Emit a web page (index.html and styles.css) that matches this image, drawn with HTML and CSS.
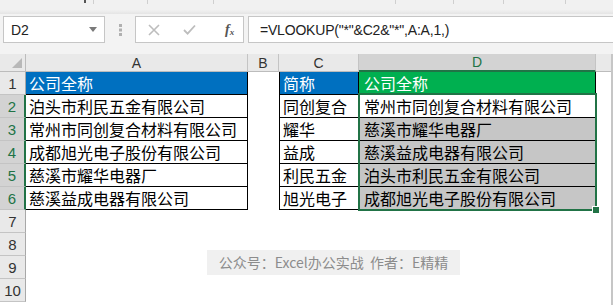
FILE: index.html
```html
<!DOCTYPE html>
<html lang="zh">
<head>
<meta charset="utf-8">
<title>VLOOKUP</title>
<link rel="stylesheet" href="styles.css">
</head>
<body>
<div class="ribbon">
  <span class="tick dark t1"></span>
  <span class="tick t2"></span>
  <span class="tick t3"></span>
  <span class="tick t4"></span>
  <span class="tick t5"></span>
  <span class="tick t6"></span>
  <span class="tick t7"></span>
  <span class="tick t8"></span>
</div>
<div class="fbar">
  <div class="namebox">
    <span class="ref">D2</span>
    <svg class="arrow" width="8" height="5" viewBox="0 0 8 5"><path d="M0 0H8L4 5Z" fill="#7a7a7a"/></svg>
  </div>
  <div class="grip">
    <svg width="3" height="12" viewBox="0 0 3 12"><rect x="0" y="0" width="3" height="3" fill="#b0b0b0"/><rect x="0" y="4.5" width="3" height="3" fill="#b0b0b0"/><rect x="0" y="9" width="3" height="3" fill="#b0b0b0"/></svg>
  </div>
  <div class="fnbox">
    <svg class="ico" width="12" height="12" viewBox="0 0 12 12"><path d="M1 1L11 11M11 1L1 11" stroke="#bdbdbd" stroke-width="1.6" fill="none"/></svg>
    <svg class="ico" width="13" height="11" viewBox="0 0 13 11"><path d="M1 6L4.6 9.6L12 1.5" stroke="#bdbdbd" stroke-width="1.8" fill="none"/></svg>
    <span class="fx">f<sub>x</sub></span>
  </div>
  <div class="formula">=VLOOKUP("*"&amp;C2&amp;"*",A:A,1,)</div>
</div>
<div class="sheet">
  <div class="corner"><svg width="10" height="10" viewBox="0 0 10 10"><path d="M10 0V10H0Z" fill="#b8b8b8"/></svg></div>
  <div class="ch">A</div>
  <div class="ch">B</div>
  <div class="ch">C</div>
  <div class="ch sel">D</div>
  <div class="ch last"></div>

  <div class="rh">1</div>
  <div class="c t blue">公司全称</div>
  <div class="c"></div>
  <div class="c t lft blue">简称</div>
  <div class="c t colD green">公司全称</div>
  <div class="c"></div>

  <div class="rh sel">2</div>
  <div class="c t">泊头市利民五金有限公司</div>
  <div class="c"></div>
  <div class="c t lft">同创复合</div>
  <div class="c t colD">常州市同创复合材料有限公司</div>
  <div class="c"></div>

  <div class="rh sel">3</div>
  <div class="c t">常州市同创复合材料有限公司</div>
  <div class="c"></div>
  <div class="c t lft">耀华</div>
  <div class="c t colD shade">慈溪市耀华电器厂</div>
  <div class="c"></div>

  <div class="rh sel">4</div>
  <div class="c t">成都旭光电子股份有限公司</div>
  <div class="c"></div>
  <div class="c t lft">益成</div>
  <div class="c t colD shade">慈溪益成电器有限公司</div>
  <div class="c"></div>

  <div class="rh sel">5</div>
  <div class="c t">慈溪市耀华电器厂</div>
  <div class="c"></div>
  <div class="c t lft">利民五金</div>
  <div class="c t colD shade">泊头市利民五金有限公司</div>
  <div class="c"></div>

  <div class="rh sel">6</div>
  <div class="c t">慈溪益成电器有限公司</div>
  <div class="c"></div>
  <div class="c t lft">旭光电子</div>
  <div class="c t colD shade">成都旭光电子股份有限公司</div>
  <div class="c"></div>

  <div class="rh">7</div><div class="c span"></div>
  <div class="rh">8</div><div class="c span"></div>
  <div class="rh">9</div><div class="c span"></div>
  <div class="rh">10</div><div class="c span"></div>

  <div class="selection"><span class="handle"></span></div>

  <div class="watermark">公众号：Excel办公实战&nbsp;&nbsp;作者：E精精</div>
</div>
</body>
</html>
```
FILE: styles.css
```css
html, body {
  margin: 0;
  padding: 0;
  background: #ffffff;
  overflow: hidden;
}
body {
  width: 613px;
  height: 305px;
  font-family: "Liberation Sans", Arial, sans-serif;
}

.ribbon {
  height: 14px;
  background: linear-gradient(#f1f1f1, #f1f1f1 70%, #e4e4e4);
  display: flex;
  align-items: flex-start;
}
.tick {
  width: 1px;
  height: 4px;
  background: #cfcfcf;
}
.tick.dark { background: #555; width: 2px; height: 3px; }
.t1 { margin-left: 84px; }
.t2 { margin-left: 7px; }
.t3 { margin-left: 53px; }
.t4 { margin-left: 65px; }
.t5 { margin-left: 181px; }
.t6 { margin-left: 57px; }
.t7 { margin-left: 49px; }
.t8 { margin-left: 61px; }

.fbar {
  height: 40px;
  background: #f3f3f3;
  display: flex;
  align-items: flex-start;
  padding-top: 2px;
  box-sizing: border-box;
}
.namebox {
  margin-left: 3px;
  width: 102px;
  height: 27px;
  box-sizing: border-box;
  background: #fff;
  border: 1px solid #c6c6c6;
  display: flex;
  align-items: center;
  justify-content: space-between;
  padding: 0 7px 0 7px;
  font-size: 14px;
  color: #222;
}
.grip {
  width: 30px;
  height: 27px;
  display: flex;
  align-items: center;
  justify-content: center;
}
.fnbox {
  width: 109px;
  height: 27px;
  box-sizing: border-box;
  background: #fff;
  border: 1px solid #c6c6c6;
  display: flex;
  align-items: center;
  padding-left: 12px;
  gap: 23px;
}
.fx {
  font-family: "Liberation Serif", serif;
  font-style: italic;
  font-weight: bold;
  font-size: 14px;
  color: #555;
  margin-left: 6px;
}
.fx sub { font-size: 9px; vertical-align: -1px; }
.formula {
  margin-left: 4px;
  flex: 1;
  height: 27px;
  box-sizing: border-box;
  background: #fff;
  border: 1px solid #c6c6c6;
  border-right: none;
  padding-left: 11px;
  display: flex;
  align-items: center;
  font-size: 14px;
  color: #222;
  letter-spacing: -0.2px;
}

.sheet {
  position: relative;
  width: 611px;
  height: 251px;
  border-right: 2px solid #c6c6c6;
  display: grid;
  grid-template-columns: 26px 222px 31px 80px 237px 15px;
  grid-template-rows: 18px repeat(10, 23px);
  background: #fff;
}
.corner {
  background: #e9e9e9;
  border-right: 1px solid #bcbcbc;
  border-bottom: 1px solid #bcbcbc;
  box-sizing: border-box;
  display: flex;
  align-items: flex-end;
  justify-content: flex-end;
  padding: 0 3px 3px 0;
}
.ch {
  background: #e9e9e9;
  border-right: 1px solid #c4c4c4;
  border-bottom: 1px solid #bcbcbc;
  box-sizing: border-box;
  font-size: 14px;
  color: #333;
  display: flex;
  align-items: center;
  justify-content: center;
}
.ch.sel {
  background: #d3d3d3;
  color: #217346;
  border-bottom: 2px solid #217346;
}
.ch.last { border-right: none; }
.rh {
  grid-column: 1;
  background: #e9e9e9;
  border-right: 1px solid #a8a8a8;
  border-bottom: 1px solid #c4c4c4;
  box-sizing: border-box;
  font-size: 15px;
  color: #333;
  display: flex;
  align-items: center;
  justify-content: center;
  padding-top: 1px;
}
.rh.sel {
  background: #d3d3d3;
  color: #217346;
  border-right: 2px solid #217346;
}
.c {
  box-sizing: border-box;
  font-family: "Noto Sans CJK SC", "Noto Sans", sans-serif;
  font-size: 16px;
  line-height: 22px;
  color: #000;
  padding-left: 3px;
  white-space: nowrap;
}
.c.span { grid-column: 2 / 7; }
.t {
  border-right: 1px solid #000;
  border-bottom: 1px solid #000;
}
.t.lft {
  border-left: 1px solid #000;
  padding-left: 3px;
}
.t.colD { padding-left: 5px; }
.blue { background: #0070c0; color: #fff; }
.green { background: #00b050; color: #fff; }
.shade { background: #c6c6c6; }

.selection {
  position: absolute;
  grid-column: 5 / 6;
  grid-row: 3 / 8;
  top: -2px;
  left: -1px;
  right: -1px;
  bottom: -1px;
  border: 2px solid #217346;
  pointer-events: none;
}
.handle {
  position: absolute;
  right: -5px;
  bottom: -5px;
  width: 6px;
  height: 6px;
  background: #217346;
  border: 1px solid #fff;
}

.watermark {
  position: absolute;
  left: 207px;
  top: 196px;
  width: 253px;
  height: 25px;
  background: #f0f0f0;
  color: #8c8c8c;
  font-family: "Noto Sans CJK SC", sans-serif;
  font-size: 14px;
  line-height: 25px;
  text-align: center;
  white-space: nowrap;
}
```
